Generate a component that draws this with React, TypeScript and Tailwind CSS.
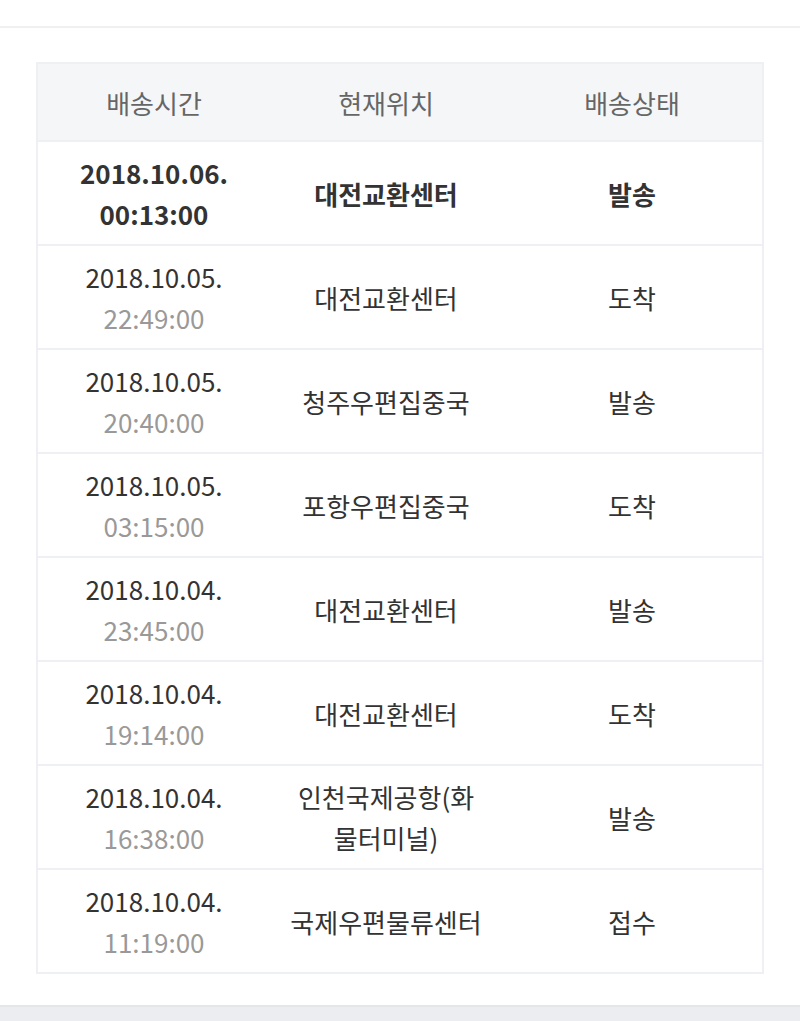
const rows = [
  {date: "2018.10.06.", time: "00:13:00", place: "대전교환센터", status: "발송", latest: true},
  {date: "2018.10.05.", time: "22:49:00", place: "대전교환센터", status: "도착"},
  {date: "2018.10.05.", time: "20:40:00", place: "청주우편집중국", status: "발송"},
  {date: "2018.10.05.", time: "03:15:00", place: "포항우편집중국", status: "도착"},
  {date: "2018.10.04.", time: "23:45:00", place: "대전교환센터", status: "발송"},
  {date: "2018.10.04.", time: "19:14:00", place: "대전교환센터", status: "도착"},
  {date: "2018.10.04.", time: "16:38:00", place: "인천국제공항(화물터미널)", status: "발송"},
  {date: "2018.10.04.", time: "11:19:00", place: "국제우편물류센터", status: "접수"},
];

export default function App() {
  return (
    <div
      className="w-[800px] h-[1021px] bg-white flex flex-col overflow-hidden"
      style={{fontFamily: '"Noto Sans CJK KR", "Noto Sans", sans-serif'}}
    >
      <div className="h-[28px] shrink-0 border-b-2 border-[#f0f0f2]"/>
      <div className="px-[36px] pt-[34px] flex-1">
        <div className="border-2 border-[#eef0f3] text-[26px] text-[#333]">
          <div className="grid grid-cols-[232px_232px_1fr] h-[76px] items-center bg-[#f5f6f8] text-[#666] text-center">
            <div>배송시간</div>
            <div>현재위치</div>
            <div>배송상태</div>
          </div>
          {rows.map((row, i) => (
            <div
              key={i}
              className={"grid grid-cols-[232px_232px_1fr] h-[104px] items-center text-center border-t-2 border-[#eef0f3] leading-[41px] " + (row.latest ? "font-bold" : "")}
            >
              <div>
                <div>{row.date}</div>
                <div className={row.latest ? "" : "text-[#999]"}>{row.time}</div>
              </div>
              <div className="px-[18px] break-all">{row.place}</div>
              <div>{row.status}</div>
            </div>
          ))}
        </div>
      </div>
      <div className="h-[16px] shrink-0 bg-[#ebedf0] border-t-2 border-[#e4e6ea]"/>
    </div>
  );
}
